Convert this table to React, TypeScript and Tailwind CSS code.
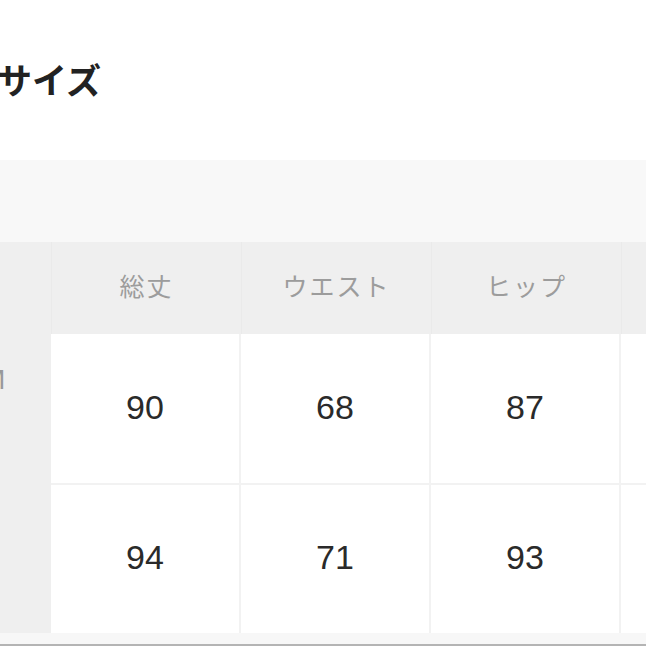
import React from "react";

const jp = { fontFamily: '"Noto Sans CJK JP", "Noto Sans", sans-serif' };
const num = { fontFamily: '"Liberation Sans", Arial, sans-serif' };

export default function App() {
  const headers = ["総丈", "ウエスト", "ヒップ", ""];
  const rows = [
    ["90", "68", "87", ""],
    ["94", "71", "93", ""],
  ];
  return (
    <div className="w-[646px] h-[646px] overflow-hidden bg-white flex flex-col" style={jp}>
      <div className="h-[160px] shrink-0 flex items-start pt-[54px]">
        <h1 className="ml-[-3px] text-[35px] leading-[50px] font-bold text-[#222]">サイズ</h1>
      </div>
      <div className="h-[82px] shrink-0 bg-[#f8f8f8]" />
      <div className="grid grid-cols-[51px_190px_190px_190px_190px] shrink-0 w-[811px]">
        <div className="h-[92px] bg-[#efefef]" />
        {headers.map((h, i) => (
          <div
            key={i}
            className="h-[92px] bg-[#efefef] border-l border-[#eaeaea] flex items-center justify-center pb-[4px] text-[25px] text-[#9c9c9c] tracking-[2px]"
          >
            {h}
          </div>
        ))}
        {rows.map((r, ri) => (
          <React.Fragment key={ri}>
            <div
              className={`bg-[#efefef] overflow-hidden relative ${ri === 0 ? "h-[151px]" : "h-[148px]"}`}
            >
              {ri === 0 && (
                <span className="absolute left-[-18px] top-[30px] text-[28px] leading-[32px] text-[#999]" style={num}>
                  M
                </span>
              )}
            </div>
            {r.map((v, ci) => (
              <div
                key={ci}
                className={`bg-white border-r-2 border-[#f2f2f2] flex items-center justify-center text-[34px] text-[#2a2a2a] ${
                  ri === 0 ? "h-[151px] pb-[2px] border-b-2" : "h-[148px] pb-[4px]"
                }`}
                style={num}
              >
                {v}
              </div>
            ))}
          </React.Fragment>
        ))}
      </div>
      <div className="h-[11px] shrink-0 bg-[#f7f7f7]" />
      <div className="h-[2px] shrink-0 bg-[#b4b4b4]" />
    </div>
  );
}
